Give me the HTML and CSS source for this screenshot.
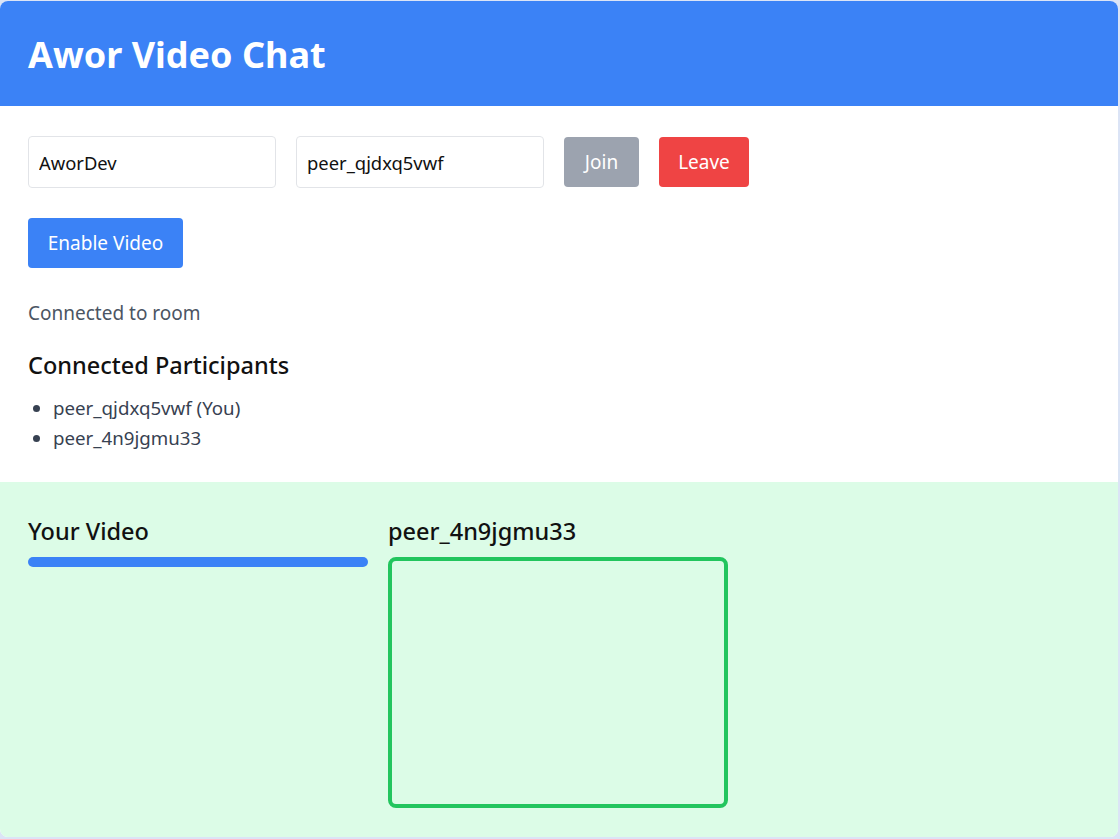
FILE: index.html
```html
<!DOCTYPE html>
<html lang="en">
<head>
<meta charset="utf-8">
<title>Awor Video Chat</title>
<link rel="stylesheet" href="styles.css">
</head>
<body>
<div class="card">
  <header class="header">
    <h1 class="title">Awor Video Chat</h1>
  </header>
  <section class="controls">
    <div class="row">
      <input class="field" type="text" value="AworDev">
      <input class="field" type="text" value="peer_qjdxq5vwf">
      <button class="btn btn-gray">Join</button>
      <button class="btn btn-red">Leave</button>
    </div>
    <div class="row">
      <button class="btn btn-blue">Enable Video</button>
    </div>
    <p class="status">Connected to room</p>
    <h2 class="sub">Connected Participants</h2>
    <ul class="plist">
      <li>peer_qjdxq5vwf (You)</li>
      <li>peer_4n9jgmu33</li>
    </ul>
  </section>
  <section class="videos">
    <div class="vcol">
      <h3 class="vtitle">Your Video</h3>
      <div class="vlocal"></div>
    </div>
    <div class="vcol">
      <h3 class="vtitle">peer_4n9jgmu33</h3>
      <div class="vremote"></div>
    </div>
  </section>
</div>
</body>
</html>
```
FILE: styles.css
```css
* { box-sizing: border-box; }
html, body { margin: 0; padding: 0; }
body {
  background: #dbe4f6;
  font-family: "Noto Sans", "Open Sans", sans-serif;
  color: #111;
  padding: 1px 2px 2px 0;
  height: 839px;
  overflow: hidden;
}
.card {
  height: 836px;
  border-radius: 8px;
  overflow: hidden;
  background: #fff;
  display: flex;
  flex-direction: column;
}
.header {
  background: #3b82f6;
  height: 105px;
  padding: 2px 28px 0;
  display: flex;
  align-items: center;
}
.title {
  margin: 0;
  color: #fff;
  font-size: 36px;
  font-weight: 700;
  letter-spacing: 0;
}
.controls {
  padding: 30px 28px 29px;
}
.row {
  display: flex;
  gap: 20px;
  align-items: center;
  margin-bottom: 30px;
}
.field {
  width: 248px;
  height: 52px;
  border: 1px solid #e2e4e8;
  border-radius: 4px;
  padding: 0 10px;
  font-family: inherit;
  font-size: 18.4px;
  color: #111;
  outline: none;
}
.btn {
  height: 50px;
  border: none;
  border-radius: 4px;
  padding: 0;
  font-family: inherit;
  font-size: 19px;
  color: #fff;
}
.btn-gray { background: #9ca3af; width: 75px; }
.btn-red { background: #ef4444; width: 90px; }
.btn-blue { background: #3b82f6; width: 155px; }
.status {
  margin: 2px 0 22px;
  font-size: 19px;
  color: #4b5563;
  line-height: 30px;
}
.sub {
  margin: 0 0 13px;
  font-size: 23.5px;
  font-weight: 500;
  line-height: 30px;
}
.plist {
  margin: 0;
  padding-left: 25px;
  font-size: 18.7px;
  line-height: 30px;
  color: #374151;
}
.videos {
  flex: 1;
  background: #dcfce7;
  padding: 33px 28px 0;
  display: flex;
  gap: 20px;
  align-items: flex-start;
}
.vcol { width: 340px; }
.vtitle {
  margin: 0 0 10px;
  font-size: 23.5px;
  font-weight: 500;
  line-height: 32px;
}
.vlocal {
  height: 10px;
  border-radius: 5px;
  background: #3b82f6;
}
.vremote {
  height: 251px;
  border: 4px solid #22c55e;
  border-radius: 8px;
}
```
